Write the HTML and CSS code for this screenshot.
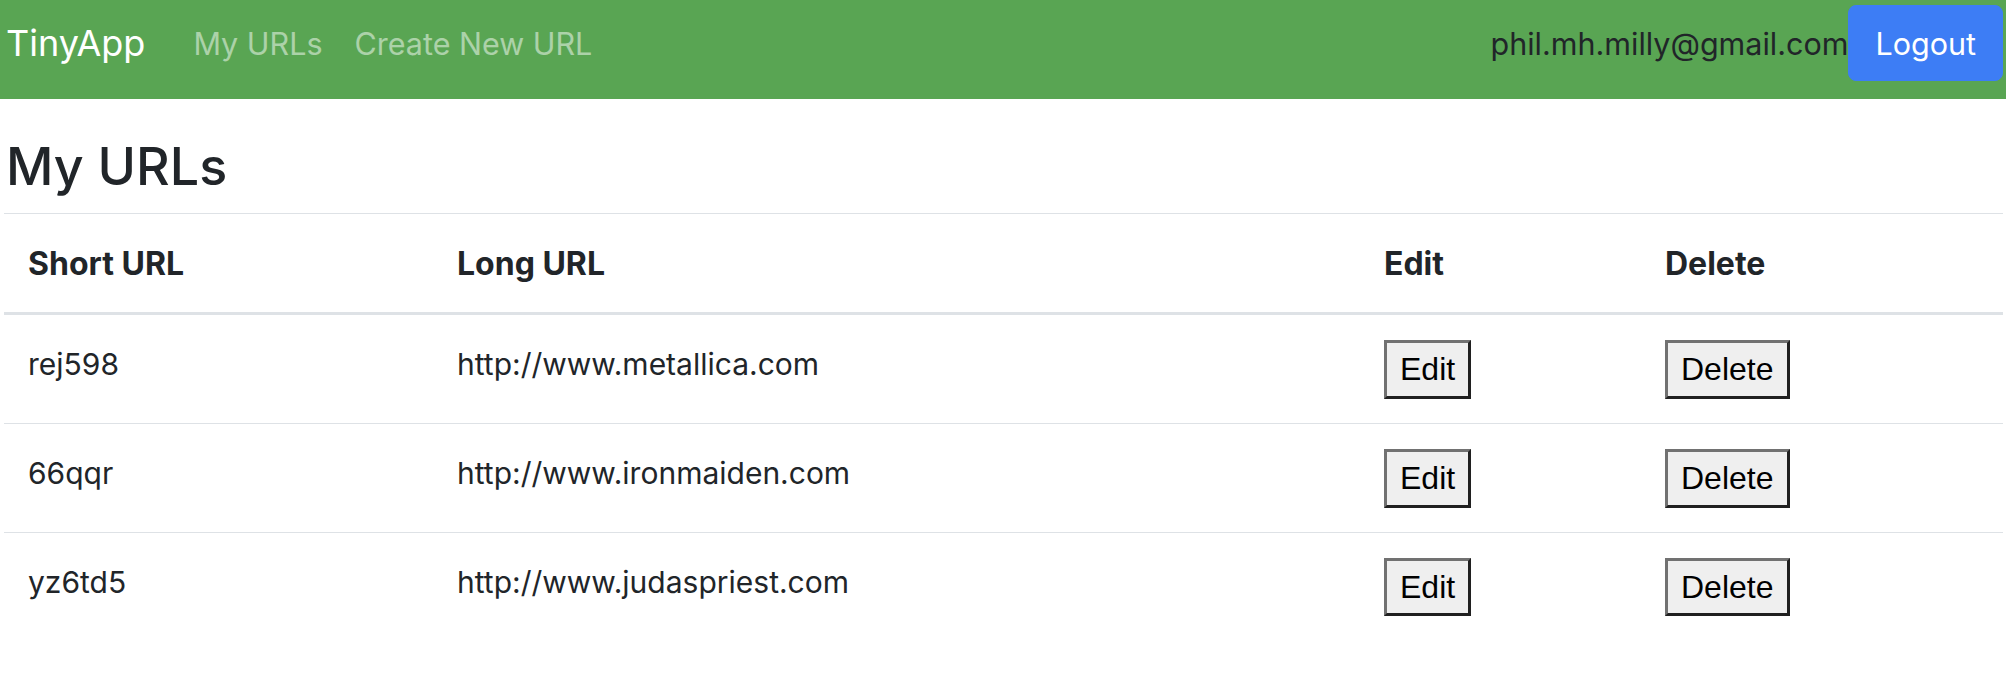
FILE: index.html
```html
<!DOCTYPE html>
<html lang="en">
<head>
<meta charset="utf-8">
<title>TinyApp</title>
<link rel="stylesheet" href="styles.css">
</head>
<body>
<nav class="navbar">
  <a class="brand" href="#">TinyApp</a>
  <div class="nav-links">
    <a class="nav-link" href="#">My URLs</a>
    <a class="nav-link" href="#">Create New URL</a>
  </div>
  <div class="nav-user">
    <span class="user-email">phil.mh.milly@gmail.com</span>
    <button class="btn-logout" type="button">Logout</button>
  </div>
</nav>
<main class="content">
  <h3 class="page-title">My URLs</h3>
  <table class="url-table">
    <thead>
      <tr>
        <th class="col-short">Short URL</th>
        <th class="col-long">Long URL</th>
        <th class="col-edit">Edit</th>
        <th class="col-delete">Delete</th>
      </tr>
    </thead>
    <tbody>
      <tr>
        <td>rej598</td>
        <td>http://www.metallica.com</td>
        <td><button class="btn-plain" type="button">Edit</button></td>
        <td><button class="btn-plain" type="button">Delete</button></td>
      </tr>
      <tr>
        <td>66qqr</td>
        <td>http://www.ironmaiden.com</td>
        <td><button class="btn-plain" type="button">Edit</button></td>
        <td><button class="btn-plain" type="button">Delete</button></td>
      </tr>
      <tr>
        <td>yz6td5</td>
        <td>http://www.judaspriest.com</td>
        <td><button class="btn-plain" type="button">Edit</button></td>
        <td><button class="btn-plain" type="button">Delete</button></td>
      </tr>
    </tbody>
  </table>
</main>
</body>
</html>
```

FILE: styles.css
```css
* { box-sizing: border-box; }

html, body {
  margin: 0;
  padding: 0;
  background: #ffffff;
}

body {
  font-family: Inter, "Noto Sans", "Liberation Sans", sans-serif;
  font-size: 32px;
  line-height: 1.5;
  color: #212529;
}

.navbar {
  display: flex;
  align-items: flex-start;
  height: 99px;
  padding: 5px 3px 0 6px;
  background: #59a553;
}

.brand {
  font-size: 36px;
  line-height: 77px;
  color: #ffffff;
  text-decoration: none;
  margin-right: 48px;
}

.nav-links {
  display: flex;
  gap: 32px;
}

.nav-link {
  font-size: 30.5px;
  line-height: 77px;
  color: rgba(255, 255, 255, 0.5);
  text-decoration: none;
}

.nav-user {
  margin-left: auto;
  display: flex;
  align-items: flex-start;
}

.user-email {
  font-size: 30.5px;
  line-height: 77px;
  color: #212529;
}

.btn-logout {
  height: 76px;
  padding: 0 26px;
  border: 1px solid #3d7df5;
  border-radius: 8px;
  background: #3d7df5;
  color: #ffffff;
  font-family: Inter, "Noto Sans", sans-serif;
  font-size: 30.5px;
}

.content {
  padding: 0 3px 0 4px;
}

.page-title {
  margin: 0;
  padding-top: 36px;
  font-size: 52px;
  font-weight: 500;
  line-height: 64px;
  margin-bottom: 14px;
  padding-left: 2px;
}

.url-table {
  width: 100%;
  border-collapse: collapse;
}

.url-table th,
.url-table td {
  text-align: left;
  vertical-align: top;
  padding: 25px 24px 24px;
  border-top: 1px solid #dee2e6;
  line-height: 48px;
}

.url-table th {
  font-weight: 700;
  font-size: 32px;
  padding-top: 26px;
  padding-bottom: 24px;
}

.url-table td {
  font-size: 30px;
}

.url-table thead th {
  border-bottom: 3px solid #dee2e6;
}

.col-short { width: 429px; }
.col-long { width: 927px; }
.col-edit { width: 281px; }

.btn-plain {
  font-family: "Liberation Sans", Arial, sans-serif;
  font-size: 32px;
  color: #000000;
  background: #efefef;
  padding: 8px 13px;
  border-style: solid;
  border-width: 3px;
  border-color: #717171 #202020 #202020 #717171;
  border-radius: 0;
  line-height: 1.15;
  vertical-align: top;
  margin: 0;
}
```
